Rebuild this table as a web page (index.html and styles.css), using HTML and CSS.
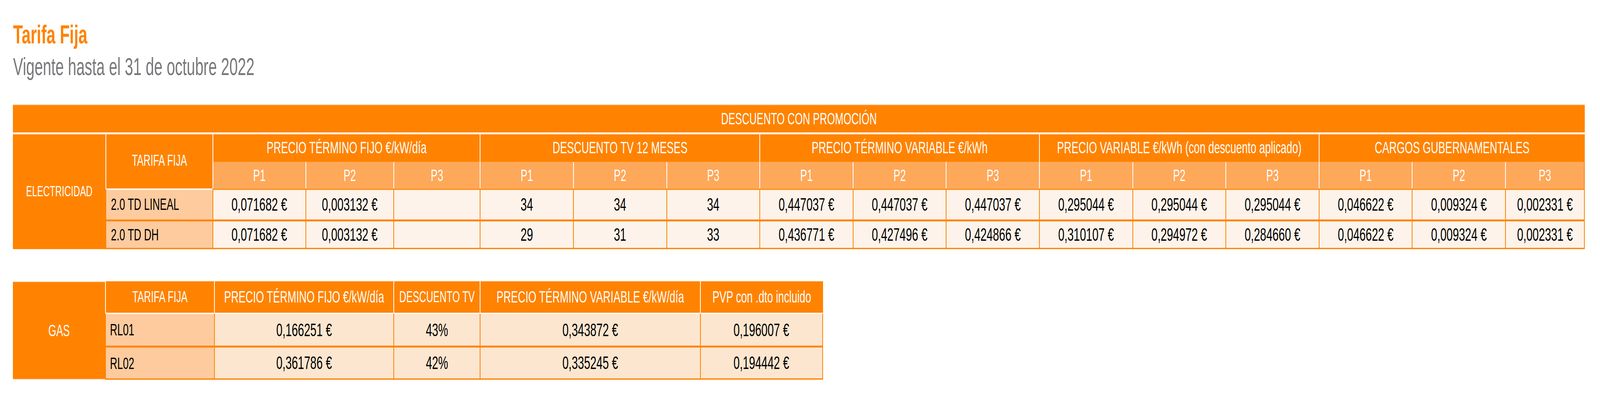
FILE: index.html
```html
<!DOCTYPE html>
<html lang="es">
<head>
<meta charset="utf-8">
<title>Tarifa Fija</title>
<link rel="stylesheet" href="styles.css">
</head>
<body>
<div class="page">
  <h1 class="title">Tarifa Fija</h1>
  <p class="subtitle">Vigente hasta el 31 de octubre 2022</p>

  <table class="rates rates-elec">
    <colgroup>
      <col class="col-side">
      <col class="col-tariff">
      <col class="col-p-first"><col class="col-p-narrow"><col class="col-p-short">
      <col class="col-p"><col class="col-p"><col class="col-p">
      <col class="col-p"><col class="col-p"><col class="col-p">
      <col class="col-p"><col class="col-p"><col class="col-p">
      <col class="col-p"><col class="col-p"><col class="col-p-end">
    </colgroup>
    <tbody>
      <tr class="row-promo">
        <th class="promo" colspan="17">DESCUENTO CON PROMOCIÓN</th>
      </tr>
      <tr class="row-group">
        <th class="side" rowspan="4">ELECTRICIDAD</th>
        <th class="tariff-head" rowspan="2">TARIFA FIJA</th>
        <th class="group" colspan="3">PRECIO TÉRMINO FIJO €/kW/día</th>
        <th class="group" colspan="3">DESCUENTO TV 12 MESES</th>
        <th class="group" colspan="3">PRECIO TÉRMINO VARIABLE €/kWh</th>
        <th class="group" colspan="3">PRECIO VARIABLE €/kWh (con descuento aplicado)</th>
        <th class="group" colspan="3">CARGOS GUBERNAMENTALES</th>
      </tr>
      <tr class="row-period">
        <th class="period">P1</th><th class="period">P2</th><th class="period">P3</th>
        <th class="period">P1</th><th class="period">P2</th><th class="period">P3</th>
        <th class="period">P1</th><th class="period">P2</th><th class="period">P3</th>
        <th class="period">P1</th><th class="period">P2</th><th class="period">P3</th>
        <th class="period">P1</th><th class="period">P2</th><th class="period period-end">P3</th>
      </tr>
      <tr class="row-first">
        <td class="name">2.0 TD LINEAL</td>
        <td class="val">0,071682 €</td><td class="val">0,003132 €</td><td class="val"></td>
        <td class="val">34</td><td class="val">34</td><td class="val">34</td>
        <td class="val">0,447037 €</td><td class="val">0,447037 €</td><td class="val">0,447037 €</td>
        <td class="val">0,295044 €</td><td class="val">0,295044 €</td><td class="val">0,295044 €</td>
        <td class="val">0,046622 €</td><td class="val">0,009324 €</td><td class="val val-end">0,002331 €</td>
      </tr>
      <tr class="row-last">
        <td class="name">2.0 TD DH</td>
        <td class="val">0,071682 €</td><td class="val">0,003132 €</td><td class="val"></td>
        <td class="val">29</td><td class="val">31</td><td class="val">33</td>
        <td class="val">0,436771 €</td><td class="val">0,427496 €</td><td class="val">0,424866 €</td>
        <td class="val">0,310107 €</td><td class="val">0,294972 €</td><td class="val">0,284660 €</td>
        <td class="val">0,046622 €</td><td class="val">0,009324 €</td><td class="val val-end">0,002331 €</td>
      </tr>
    </tbody>
  </table>

  <table class="rates rates-gas">
    <colgroup>
      <col class="gcol-side">
      <col class="gcol-tariff">
      <col class="gcol-fixed">
      <col class="gcol-disc">
      <col class="gcol-var">
      <col class="gcol-pvp">
    </colgroup>
    <tbody>
      <tr class="row-ghead">
        <th class="side side-gas" rowspan="3">GAS</th>
        <th class="tariff-head">TARIFA FIJA</th>
        <th class="group">PRECIO TÉRMINO FIJO €/kW/día</th>
        <th class="group group-tight">DESCUENTO TV</th>
        <th class="group">PRECIO TÉRMINO VARIABLE €/kW/día</th>
        <th class="group">PVP con .dto incluido</th>
      </tr>
      <tr class="row-first">
        <td class="name">RL01</td>
        <td class="val">0,166251 €</td>
        <td class="val">43%</td>
        <td class="val">0,343872 €</td>
        <td class="val val-end">0,196007 €</td>
      </tr>
      <tr class="row-last">
        <td class="name">RL02</td>
        <td class="val">0,361786 €</td>
        <td class="val">42%</td>
        <td class="val">0,335245 €</td>
        <td class="val val-end">0,194442 €</td>
      </tr>
    </tbody>
  </table>
</div>
</body>
</html>
```

FILE: styles.css
```css
* {
  box-sizing: border-box;
}

html {
  background: #ffffff;
}

body {
  margin: 0;
  padding: 0;
  min-height: 100vh;
  font-family: "Liberation Sans", Arial, sans-serif;
  color: #000000;
}

/* The window is 4096px wide for a 6609×1008 design: the page is laid out
   at 4096/6609 of the design size and stretched vertically back to the
   design's 1008px height. */
.page {
  width: 100%;
  padding: 34.7px 0 0 33.47px;
  transform: scaleY(1.61353);
  transform-origin: 0 0;
}

.title {
  margin: 0;
  font-size: 40.9px;
  line-height: 40.9px;
  font-weight: 700;
  color: #ff8300;
}

.subtitle {
  margin: 9.92px 0 0;
  font-size: 38.5px;
  line-height: 39.04px;
  color: #77787b;
}

/* ---------- tables ---------- */

.rates {
  border-collapse: separate;
  border-spacing: 0;
  table-layout: fixed;
}

.rates th,
.rates td {
  padding: 0;
  font-weight: 400;
  line-height: 1;
  text-align: center;
  vertical-align: middle;
  white-space: nowrap;
  overflow: hidden;
}

.rates th {
  color: #ffffff;
  background: #ff8300;
}

.rates-elec {
  width: 4023.5px;
  margin-top: 41.52px;
}

.rates-gas {
  width: 2073.1px;
  margin-top: 51.44px;
}

/* column widths – electricity */
.col-side { width: 236.75px; }
.col-tariff { width: 273.93px; }
.col-p-first { width: 237.37px; }
.col-p-narrow { width: 225.59px; }
.col-p-short { width: 221.25px; }
.col-p { width: 238.61px; }
.col-p-end { width: 203.9px; }

/* column widths – gas */
.gcol-side { width: 235.51px; }
.gcol-tariff { width: 278.89px; }
.gcol-fixed { width: 459.24px; }
.gcol-disc { width: 221.25px; }
.gcol-var { width: 563.36px; }
.gcol-pvp { width: 314.85px; }

/* row heights */
.row-promo { height: 46.48px; }
.row-group { height: 44px; }
.row-period { height: 42.14px; }
.rates-elec .row-first { height: 49.58px; }
.rates-elec .row-last { height: 46.48px; }
.row-ghead { height: 50.2px; }
.rates-gas .row-first { height: 51.44px; }
.rates-gas .row-last { height: 54.54px; }

/* header cells */
.rates .promo {
  font-size: 26.03px;
  border-top: 1px solid #ffab66;
  border-bottom: 3.1px solid #ffffff;
}

.rates .side {
  font-size: 23.2px;
}

.rates .side-gas {
  font-size: 26px;
  border-top: 1px solid #ffffff;
  border-bottom: 1px solid #ffffff;
}

.rates .tariff-head {
  font-size: 24.79px;
  border-left: 2px solid #ffffff;
}

.rates .group {
  font-size: 26.65px;
  border-left: 2px solid #ffffff;
}

.rates .group-tight {
  font-size: 24.8px;
}

.rates .period {
  font-size: 26.03px;
  background: #fea85a;
  border-left: 2px solid #ffffff;
}

.rates .period-end {
  border-right: 2.48px solid #ff8300;
}

/* body cells */
.rates .name,
.rates .val {
  border-left: 2.48px solid #ff8300;
}

.rates .name {
  background: #fdcb9e;
  font-size: 26.03px;
  text-align: left;
  padding-left: 11.78px;
}

.rates-gas .name {
  padding-left: 10.54px;
}

.rates .val {
  background: #fdf3ea;
  font-size: 28.51px;
}

.rates-gas .val {
  background: #fde6cf;
}

.rates .val-end {
  border-right: 2.48px solid #ff8300;
}

.rates-elec .row-first .name {
  border-top: 2.48px solid #ffffff;
}

.rates-elec .row-first .val {
  border-top: 2.48px solid #ff8300;
}

.rates-gas .row-first td {
  border-top: 2.48px solid #ffffff;
}

.rates .row-last td {
  border-top: 3.1px solid #ff8300;
  border-bottom: 2.48px solid #ff8300;
}
```
